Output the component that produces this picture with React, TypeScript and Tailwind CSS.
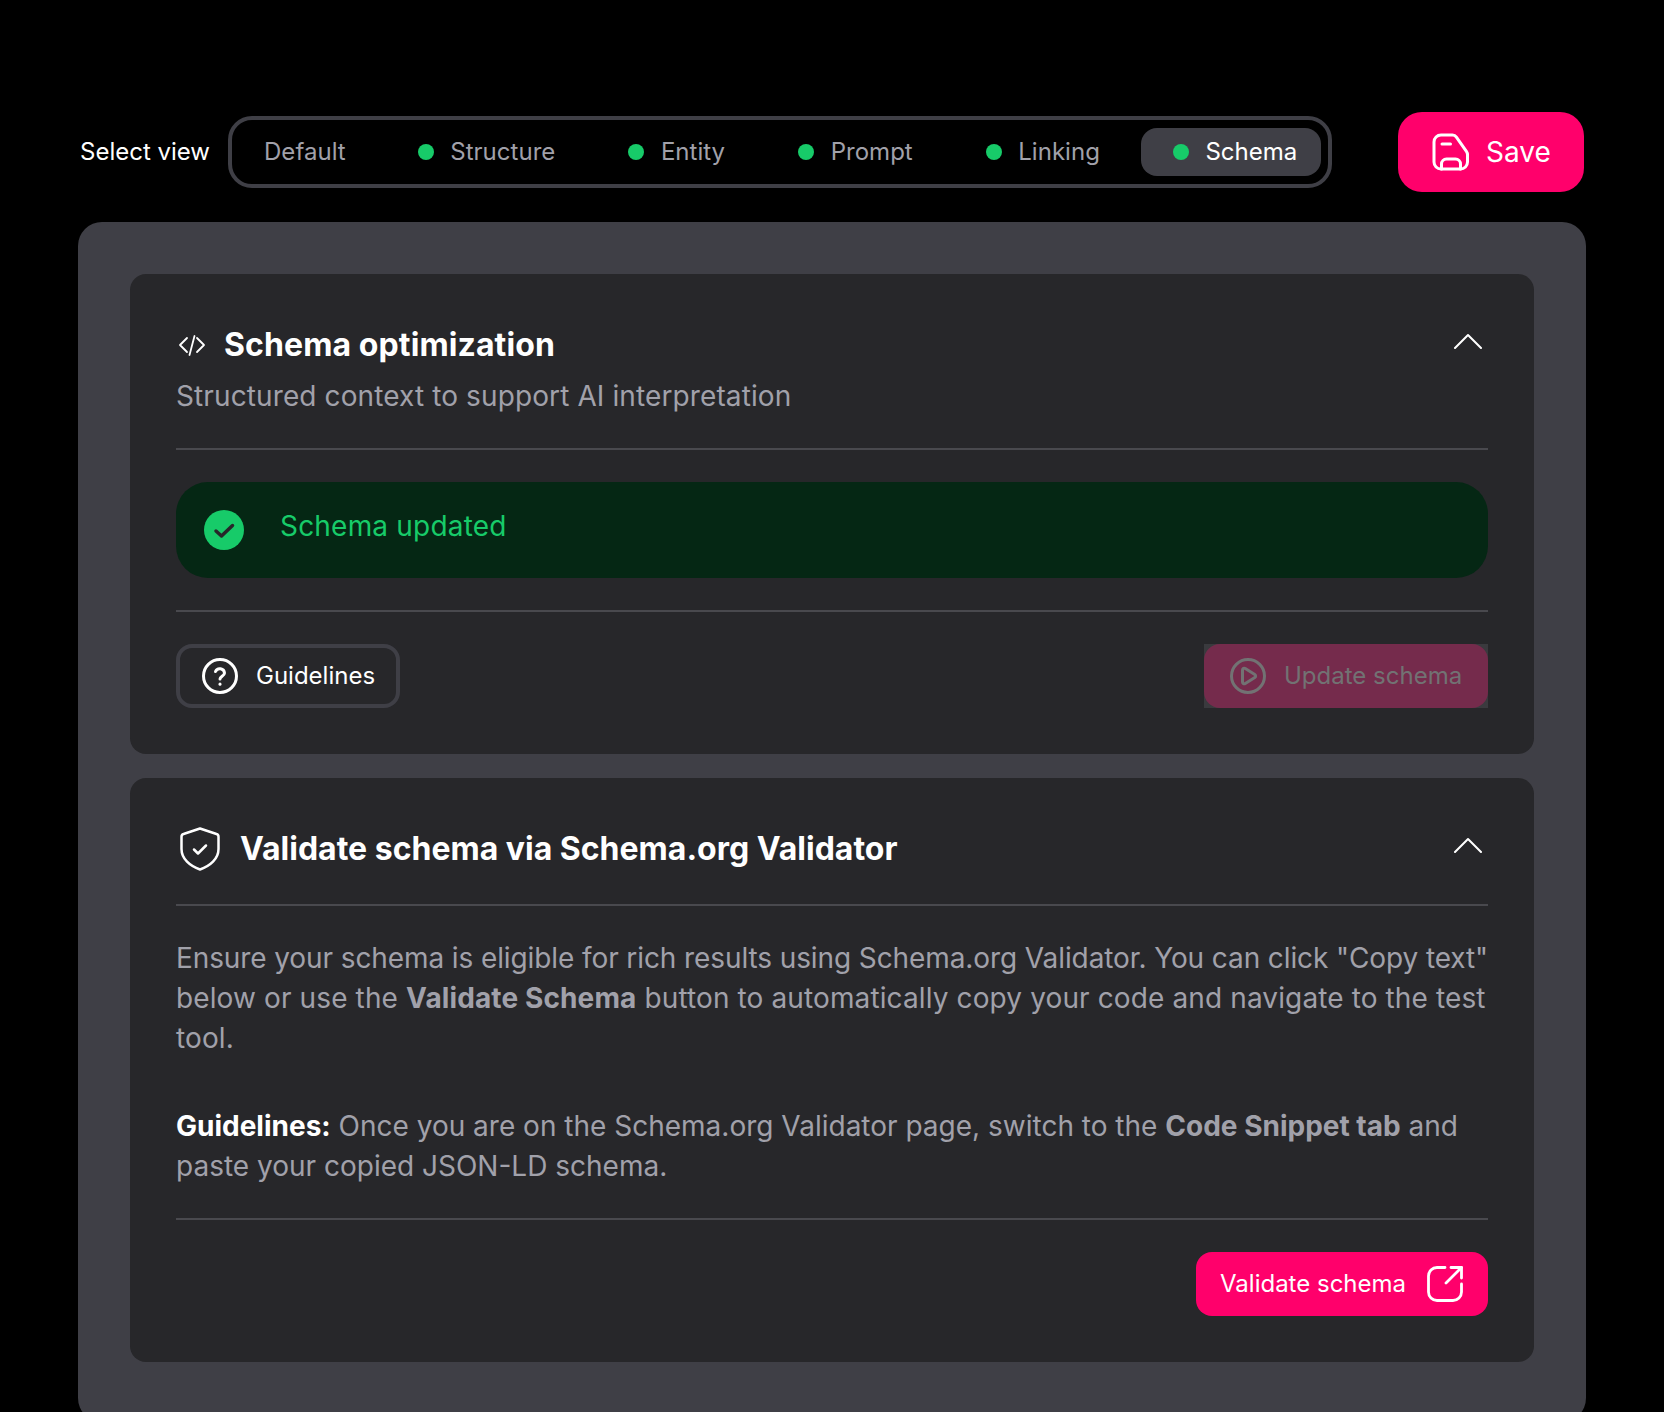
const font = { fontFamily: "Inter, sans-serif" };

const tabs = ["Structure", "Entity", "Prompt", "Linking"];

function Chevron() {
  return (
    <svg width="30" height="16" viewBox="0 0 30 16" fill="none" stroke="white" strokeWidth="2" strokeLinecap="round" strokeLinejoin="round">
      <path d="M2 15 15 2l13 13" />
    </svg>
  );
}

function Divider() {
  return <div className="h-[2px] bg-[#49494e]" />;
}

function Dot() {
  return <span className="h-4 w-4 rounded-full bg-[#17cb69]" />;
}

function SaveIcon() {
  return (
    <svg width="38" height="38" viewBox="0 0 38 38" fill="none" stroke="white" strokeWidth="3" strokeLinecap="round" strokeLinejoin="round">
      <path d="M9 2h11.500c1.600 0 3 .8 3.900 2.100l10 14.300c.7 1 1.100 2.200 1.100 3.400V29c0 3.900-3.100 7-7 7H9c-3.900 0-7-3.100-7-7V9c0-3.900 3.100-7 7-7Z" />
      <path d="M10 11h8.500" />
      <path d="M9.500 36v-5c0-2.800 2.200-5 5-5h9c2.800 0 5 2.200 5 5v5" />
    </svg>
  );
}

export default function App() {
  return (
    <div className="h-[1412px] overflow-hidden bg-black pt-[112px] pl-[78px] pr-[78px]" style={font}>
      <div className="flex h-20 items-center">
        <span className="ml-[2px] mr-[18px] text-[24px] text-white">Select view</span>
        <div className="flex h-[72px] w-[1104px] items-center gap-[17px] rounded-[24px] border-4 border-[#3f3f46] p-2 text-[24px] tracking-[0.03px] text-[#a1a1aa]">
          <span className="flex h-12 items-center pl-6 pr-[23px]">Default</span>
          {tabs.map((t) => (
            <span key={t} className="flex h-12 items-center gap-[16.500px] pl-8 pr-6">
              <Dot />
              {t}
            </span>
          ))}
          <span className="flex h-12 items-center gap-[16.500px] rounded-[16px] bg-[#3f3f46] pl-8 pr-6 text-white">
            <Dot />
            Schema
          </span>
        </div>
        <button className="ml-[66px] flex h-20 w-[186px] items-center gap-4 rounded-[24px] bg-[#ff006b] pl-[34px] text-[28px] text-white">
          <SaveIcon />
          Save
        </button>
      </div>

      <div className="mt-[30px] h-[1200px] rounded-[24px] bg-[#3f3f46] px-[52px] pt-[52px]">
        <section className="rounded-[16px] bg-[#27272a] p-[46px]">
          <div className="flex items-start justify-between">
            <div className="flex h-[50px] items-center gap-[18px] pl-[2px]">
              <svg width="28" height="22" viewBox="0 0 28 22" fill="none" stroke="white" strokeWidth="1.800" strokeLinecap="round" strokeLinejoin="round">
                <path d="M9 4 2 11l7 7" />
                <path d="M19 4l7 7-7 7" />
                <path d="M16.500 2 11.500 21" />
              </svg>
              <h2 className="text-[32px] font-bold tracking-[0.1px] text-white">Schema optimization</h2>
            </div>
            <span className="mr-[5px] mt-[13px]"><Chevron /></span>
          </div>
          <p className="mt-[6px] text-[28px] leading-10 tracking-[0.11px] text-[#a1a1aa]">Structured context to support AI interpretation</p>
          <div className="mt-8"><Divider /></div>
          <div className="my-8 flex h-24 items-center gap-[36px] rounded-[32px] bg-[#052714] pl-[28px] text-[28px] tracking-[0.2px] text-[#17cb69]">
            <svg width="40" height="40" viewBox="0 0 40 40">
              <circle cx="20" cy="20" r="20" fill="#17cb69" />
              <path d="M12 21 17.500 26 28.500 15.500" fill="none" stroke="#27272a" strokeWidth="3.500" strokeLinecap="round" strokeLinejoin="round" />
            </svg>
            <span className="-mt-2">Schema updated</span>
          </div>
          <Divider />
          <div className="mt-8 flex items-center justify-between">
            <button className="flex h-16 w-[224px] items-center gap-[18px] rounded-[16px] border-4 border-[#3f3f46] pl-[22px] text-[24px] text-white">
              <svg width="36" height="36" viewBox="0 0 36 36" fill="none" stroke="white" strokeWidth="3" strokeLinecap="round" strokeLinejoin="round">
                <circle cx="18" cy="18" r="16.500" />
                <path d="M13.500 13.500a4.700 4.700 0 0 1 9 1.500c0 3-4.500 3.500-4.500 6" />
                <path d="M18 26v.200" />
              </svg>
              Guidelines
            </button>
            <div className="bg-[#3a3a3e]">
              <button className="flex h-16 w-[284px] items-center gap-[18px] rounded-[16px] bg-[#752b4c] pl-[26px] text-[24px] text-[#727273]">
                <svg width="36" height="36" viewBox="0 0 36 36" fill="none" stroke="#727273" strokeWidth="3" strokeLinecap="round" strokeLinejoin="round">
                  <circle cx="18" cy="18" r="16.500" />
                  <path d="M12.500 12c0-1.500 1.500-2.300 2.800-1.500l9.500 5.900c1.100.7 1.100 2.500 0 3.200l-9.500 5.900c-1.300.8-2.800 0-2.800-1.500Z" />
                </svg>
                Update schema
              </button>
            </div>
          </div>
        </section>

        <section className="mt-6 rounded-[16px] bg-[#27272a] p-[46px]">
          <div className="flex items-start justify-between">
            <div className="flex h-[50px] items-center gap-[20px] pl-[4px]">
              <svg width="40" height="44" viewBox="0 0 40 44" fill="none" stroke="white" strokeWidth="2.500" strokeLinecap="round" strokeLinejoin="round">
                <path d="M20 1.500 36.500 7a2.800 2.800 0 0 1 2 2.700V22c0 10-8.500 17-18.500 20.500C10 39 1.500 32 1.500 22V9.700a2.800 2.800 0 0 1 2-2.700Z" />
                <path d="M14 22.500 18 26.500 26 18.500" />
              </svg>
              <h2 className="text-[32px] font-bold text-white">Validate schema via Schema.org Validator</h2>
            </div>
            <span className="mr-[5px] mt-[13px]"><Chevron /></span>
          </div>
          <div className="mt-[30px]"><Divider /></div>
          <p className="-mr-2 mt-8 text-[28px] leading-10 text-[#a1a1aa]">
            <span className="tracking-[-0.1px]">Ensure your schema is eligible for rich results using Schema.org Validator. You can click "Copy text" </span>
            <span className="tracking-[0.12px]">below or use the <b className="font-bold">Validate Schema</b> button to automatically copy your code and navigate to the test tool.</span>
          </p>
          <p className="mt-12 text-[28px] leading-10 text-[#a1a1aa]">
            <b className="font-bold text-white">Guidelines:</b> Once you are on the Schema.org Validator page, switch to the <b className="font-bold">Code Snippet tab</b> and paste your copied JSON-LD schema.
          </p>
          <div className="mt-8"><Divider /></div>
          <div className="mt-8 flex justify-end">
            <button className="flex h-16 w-[292px] items-center gap-[21px] rounded-[16px] bg-[#ff006b] pl-6 text-[24px] text-white">
              Validate schema
              <svg width="36" height="36" viewBox="0 0 36 36" fill="none" stroke="white" strokeWidth="2.800" strokeLinecap="round" strokeLinejoin="round">
                <path d="M18 1.500H10A8.500 8.500 0 0 0 1.500 10v16A8.500 8.500 0 0 0 10 34.500h16a8.500 8.500 0 0 0 8.500-8.500V18" />
                <path d="M19 17 34.500 1.500" />
                <path d="M24 1.500h10.500V12" />
              </svg>
            </button>
          </div>
        </section>
      </div>
    </div>
  );
}
